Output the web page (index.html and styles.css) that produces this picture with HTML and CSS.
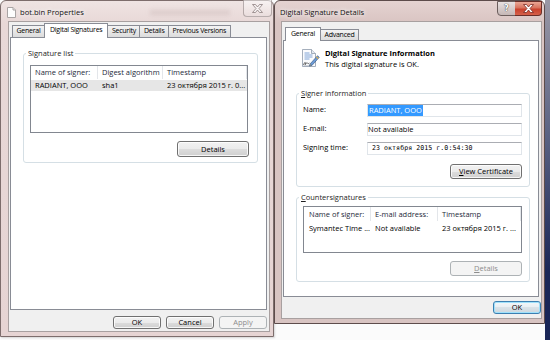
FILE: index.html
```html
<!DOCTYPE html>
<html>
<head>
<meta charset="utf-8">
<link rel="stylesheet" href="styles.css">
</head>
<body>
<div class="desktop">
  <div class="desktop-edge"></div>

  <div class="window win-props">
    <div class="titlebar">
      <svg class="file-icon" width="9" height="11" viewBox="0 0 9 11">
        <path d="M0.5 0.5h5.5l2.5 2.5v7.5h-8z" fill="#fdfdfd" stroke="#a9a4a4" stroke-width="1"/>
        <path d="M6 0.5v2.5h2.5" fill="#e9e6e6" stroke="#a9a4a4" stroke-width="1"/>
      </svg>
      <span class="title">bot.bin Properties</span>
      <span class="glass-blur"></span>
    </div>
    <div class="cap cap-close inactive">
      <svg width="11" height="9" viewBox="0 0 11 9"><path d="M0.5 0.5h3l2 2.5 2-2.5h3l-3.5 4 3.5 4h-3l-2-2.5-2 2.5h-3l3.5-4z" fill="#f7f3f3" stroke="#8d7f7f" stroke-width="0.8"/></svg>
    </div>
    <div class="client">
      <div class="tabs tabs-l">
        <span class="tab">General</span>
        <span class="tab active">Digital Signatures</span>
        <span class="tab">Security</span>
        <span class="tab">Details</span>
        <span class="tab">Previous Versions</span>
      </div>
      <div class="panel panel-l">
        <fieldset class="group group-list">
          <legend>Signature list</legend>
          <div class="listview lv-l">
            <div class="lv-row lv-head">
              <span class="cell">Name of signer:</span>
              <span class="cell">Digest algorithm</span>
              <span class="cell">Timestamp</span>
            </div>
            <div class="lv-row lv-item selected">
              <span class="cell">RADIANT, OOO</span>
              <span class="cell">sha1</span>
              <span class="cell">23 октября 2015 г. 0...</span>
            </div>
          </div>
          <div class="btn-line">
            <button class="btn btn-wide">Details</button>
          </div>
        </fieldset>
      </div>
      <div class="dlg-buttons">
        <button class="btn btn-dlg">OK</button>
        <button class="btn btn-dlg">Cancel</button>
        <button class="btn btn-dlg" disabled>Apply</button>
      </div>
    </div>
  </div>

  <div class="window win-details">
    <div class="titlebar">
      <span class="title">Digital Signature Details</span>
    </div>
    <div class="cap cap-help">?</div>
    <div class="cap cap-close active">
      <svg width="11" height="9" viewBox="0 0 11 9"><path d="M0.5 0.5h3l2 2.5 2-2.5h3l-3.5 4 3.5 4h-3l-2-2.5-2 2.5h-3l3.5-4z" fill="#ffffff" stroke="#7a2a22" stroke-width="0.8"/></svg>
    </div>
    <div class="client">
      <div class="tabs tabs-r">
        <span class="tab active">General</span>
        <span class="tab">Advanced</span>
      </div>
      <div class="panel panel-r">
        <div class="sig-head">
          <svg class="sig-icon" width="20" height="20" viewBox="0 0 20 20">
            <path d="M2.5 1.5h9l4 4v13h-13z" fill="#fbfcfe" stroke="#8e9aab" stroke-width="0.8"/>
            <path d="M11.5 1.5v4h4" fill="#e3e9f1" stroke="#8e9aab" stroke-width="0.8"/>
            <path d="M4.5 5h5M4.5 7h8M4.5 9h8M4.5 11h5" stroke="#6f9ad3" stroke-width="0.9"/>
            <path d="M3.5 17c1-3 2.2-3.5 1.8-1s1.2-2.4 2-1.2 0.8 1 2 0.2" stroke="#303030" fill="none" stroke-width="0.7"/>
            <path d="M3.5 17.6h7" stroke="#9aa3ae" stroke-width="0.5"/>
            <path d="M10.2 15.8l7.3-8.1 1.8 1.6-7.3 8.1-2.4 0.7z" fill="#6c9bd6" stroke="#2b4770" stroke-width="0.55"/>
            <path d="M16.4 8.9l1.8 1.6" stroke="#e9b13c" stroke-width="1.1"/>
            <path d="M10.2 15.8l-0.6 1.9 1.8-0.5z" fill="#f3dc9a" stroke="#2b4770" stroke-width="0.4"/>
          </svg>
          <div class="sig-text">
            <div class="sig-title">Digital Signature Information</div>
            <div>This digital signature is OK.</div>
          </div>
        </div>

        <fieldset class="group group-signer">
          <legend><u>S</u>igner information</legend>
          <div class="fields">
            <span class="f-label">Name:</span>
            <span class="f-input"><span class="sel">RADIANT, OOO</span></span>
            <span class="f-label">E-mail:</span>
            <span class="f-input">Not available</span>
            <span class="f-label">Signing time:</span>
            <span class="f-input mono">23 октября 2015 г.0:54:30</span>
          </div>
          <div class="btn-line">
            <button class="btn btn-wide"><u>V</u>iew Certificate</button>
          </div>
        </fieldset>

        <fieldset class="group group-counter">
          <legend><u>C</u>ountersignatures</legend>
          <div class="listview lv-r">
            <div class="lv-row lv-head">
              <span class="cell">Name of signer:</span>
              <span class="cell">E-mail address:</span>
              <span class="cell">Timestamp</span>
            </div>
            <div class="lv-row lv-item">
              <span class="cell">Symantec Time ...</span>
              <span class="cell">Not available</span>
              <span class="cell">23 октября 2015 г. ...</span>
            </div>
          </div>
          <div class="btn-line">
            <button class="btn btn-wide" disabled><u>D</u>etails</button>
          </div>
        </fieldset>
      </div>
      <div class="dlg-buttons dlg-r">
        <button class="btn btn-dlg default">OK</button>
      </div>
    </div>
  </div>
</div>
</body>
</html>
```

FILE: styles.css
```css
* { box-sizing: border-box; }
html, body { margin: 0; padding: 0; }
body {
  width: 550px;
  height: 340px;
  overflow: hidden;
  background: #ffffff;
  font-family: "Open Sans", "Noto Sans", sans-serif;
  font-size: 7.5px;
  color: #000;
}
.desktop {
  position: relative;
  width: 550px;
  height: 340px;
  background: #fbfbfb;
}
.desktop-edge {
  position: absolute;
  right: 0;
  top: 0;
  width: 5px;
  height: 340px;
  background: linear-gradient(#9a98a6, #5b6283 40%, #1a2657 80%);
}

/* windows */
.window {
  position: absolute;
  top: 0;
  display: flex;
  flex-direction: column;
  border-radius: 6px 6px 0 0;
}
.win-props {
  left: 0;
  width: 274px;
  height: 337px;
  border: 1px solid #7d6d6c;
  background: linear-gradient(#efe4e3, #e8d8d7 22px, #e6d4d3);
  padding: 0 3px 4px 7px;
  box-shadow: 1px 1px 2px rgba(0,0,0,.15);
}
.win-details {
  left: 274px;
  width: 271px;
  height: 324px;
  border: 1px solid #5d4c4b;
  background: linear-gradient(#e4d3d1, #d9c4c2 22px, #d8c4c2);
  padding: 0 2px 4px 6px;
  z-index: 2;
}

.titlebar {
  height: 20px;
  flex: none;
  display: flex;
  align-items: center;
  padding-top: 1px;
}
.file-icon { margin-left: -1px; margin-right: 4px; margin-top: 1px; }
.title {
  font-size: 7.6px;
  color: #111;
  text-shadow: 0 0 4px #fff, 0 0 6px #fff;
}
.win-details .title { margin-left: -1px; }
.glass-blur {
  width: 80px;
  height: 5px;
  margin-left: 66px;
  margin-top: 2px;
  background: rgba(150, 130, 130, .18);
  filter: blur(2px);
}

/* caption buttons */
.cap {
  position: absolute;
  top: -1px;
  height: 17px;
  display: flex;
  align-items: center;
  justify-content: center;
  border-radius: 0 0 4px 4px;
}
.cap-close.inactive {
  left: 242px;
  width: 29px;
  border: 1px solid rgba(110, 95, 95, .45);
  border-top: none;
  background: linear-gradient(rgba(255,255,255,.55), rgba(235,225,225,.35));
}
.win-details .cap { top: 0; height: 15px; }
.cap-help {
  left: 222px;
  width: 19px;
  border: 1px solid #6b5d5c;
  border-radius: 0 0 0 4px;
  background: linear-gradient(#e8e1e1, #d6cbca 50%, #c5b7b6);
  color: #fff;
  font-family: "DejaVu Sans", sans-serif;
  font-weight: bold;
  font-size: 8px;
  text-shadow: 0 0 1px #444, 0 0 1px #444;
}
.cap-close.active {
  left: 240px;
  width: 27px;
  border: 1px solid #6b2e28;
  border-left: none;
  border-radius: 0 0 4px 0;
  background: linear-gradient(#e9a795, #d8725d 45%, #c9412c 55%, #d5604a);
}

/* client area */
.client {
  flex: 1;
  display: flex;
  flex-direction: column;
  background: #f0f0f0;
  border: 1px solid rgba(80, 62, 62, .45);
}
.win-props .client { padding: 1px 2px 2px 1px; }
.win-details .client { padding: 5px 2px 2px 1px; }

/* tabs */
.tabs {
  display: flex;
  align-items: flex-end;
  padding-left: 2px;
  position: relative;
  z-index: 1;
  flex: none;
  font-size: 7px;
  letter-spacing: -0.25px;
}
.tabs-l { height: 14px; }
.tabs-r { height: 13px; }
.tab {
  height: 12px;
  line-height: 10px;
  padding: 0 3.5px;
  border: 1px solid #898c95;
  border-bottom: none;
  margin-right: -1px;
  background: linear-gradient(#f4f4f4, #e7e7e7 50%, #dcdcdc);
  white-space: nowrap;
}
.tabs-r .tab { height: 11px; line-height: 9px; }
.tab.active {
  position: relative;
  z-index: 2;
  height: 15px;
  line-height: 12px;
  margin: 0 -1px -1px 0;
  padding: 0 5px;
  background: #fff;
}
.tabs-r .tab.active { height: 14px; line-height: 11px; }

/* panels */
.panel {
  background: #fff;
  border: 1px solid #898c95;
  display: flex;
  flex-direction: column;
  flex: none;
}
.panel-l { height: 273px; padding: 10px 8px 0 12px; }
.panel-r { height: 257px; padding: 0 8px 0 12px; }

/* group boxes */
.group {
  margin: 0;
  border: 1px solid #d5dfe5;
  border-radius: 3px;
  display: flex;
  flex-direction: column;
  min-width: 0;
}
.group legend {
  line-height: 10px;
  padding: 0 2px;
  margin-left: -4px;
  color: #1e1e1e;
}
.group-list { padding: 7px 9px 5px 6px; }
.group-signer { margin-top: 18px; padding: 6px 7px 7px 6px; }
.group-counter { margin-top: 5px; padding: 4px 7px 5px 6px; }

/* list views */
.listview {
  border: 1px solid #828790;
  background: #fff;
}
.lv-l { height: 68px; }
.lv-r { height: 47px; }
.lv-row { display: grid; }
.lv-l .lv-row { grid-template-columns: 67px 65px 1fr; }
.lv-r .lv-row { grid-template-columns: 67px 67px 1fr; }
.lv-head { color: #1e2a3a; }
.lv-l .lv-head { height: 13px; line-height: 13px; }
.lv-r .lv-head { height: 14px; line-height: 14px; }
.lv-head .cell { border-right: 1px solid #e3e6ea; }
.cell {
  padding-left: 4px;
  white-space: nowrap;
  overflow: hidden;
}
.lv-l .lv-item { height: 11px; line-height: 11px; margin-top: 1px; }
.lv-r .lv-item { height: 12px; line-height: 12px; margin-top: 1px; }
.lv-r .cell:first-child { padding-left: 5px; }
.lv-item.selected { background: #e6e6e6; }

/* buttons */
.btn {
  font-family: inherit;
  font-size: 7.5px;
  color: #000;
  padding: 0;
  border: 1px solid #707070;
  border-radius: 3px;
  background: linear-gradient(#f2f2f2, #ebebeb 50%, #dddddd 50%, #cfcfcf);
  box-shadow: inset 0 0 0 1px rgba(255,255,255,.8);
  line-height: 11px;
}
.btn:disabled {
  color: #8d8d8d;
  border-color: #adb2b5;
  background: #f4f4f4;
  box-shadow: none;
}
.btn-line { display: flex; justify-content: flex-end; }
.btn-wide { width: 72px; height: 15px; }
.group-list .btn-line { margin-top: 8px; margin-right: -1px; }
.group-list .btn-wide { height: 16px; }
.group-signer .btn-line { margin-top: 9px; }
.group-counter .btn-line { margin-top: 8px; }

.dlg-buttons {
  display: flex;
  justify-content: flex-end;
  gap: 5px;
  margin-top: 6px;
}
.dlg-r { margin-top: 4px; margin-right: -2px; }
.btn-dlg { width: 48px; height: 13px; }
.btn.default {
  border-color: #3c7fb1;
  box-shadow: inset 0 0 0 1px #9fe1fb;
  background: linear-gradient(#f2f7fa, #e8eef2 50%, #d9e2e8 50%, #cdd7de);
}

/* signature details header */
.sig-head {
  display: flex;
  height: 29px;
  padding: 7px 0 0 4px;
  flex: none;
}
.sig-text {
  margin-left: 5px;
  line-height: 11px;
}
.sig-title { font-weight: bold; }

/* signer fields */
.fields {
  display: grid;
  grid-template-columns: 64px 1fr;
  row-gap: 6px;
}
.f-label { line-height: 10px; }
.f-input {
  height: 13px;
  line-height: 11px;
  border: 1px solid #e0e5ea;
  border-top-color: #abadb3;
  padding-left: 0;
  background: #fff;
  white-space: nowrap;
}
.sel {
  display: inline-block;
  background: #3399ff;
  color: #fff;
  padding: 0 1px;
  height: 11px;
}
.mono {
  font-family: "DejaVu Sans Mono", "Liberation Mono", monospace;
  font-size: 6.6px;
  padding-left: 4px;
  letter-spacing: 0.05px;
}
```
